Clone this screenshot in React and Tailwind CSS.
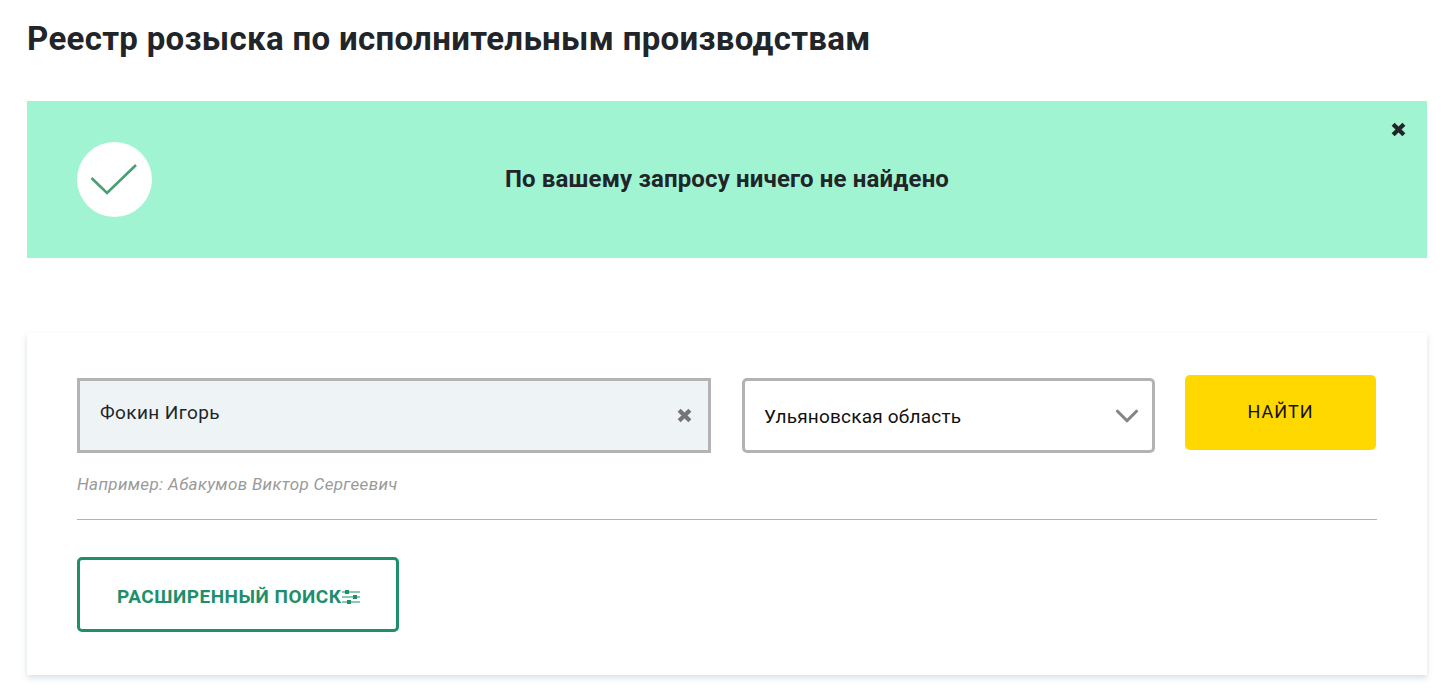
import { ChevronDown } from "lucide-react";

const CrossIcon = ({ className }) => (
  <svg viewBox="0 0 14 14" className={className} fill="none" stroke="currentColor" strokeWidth="4">
    <path d="M2 2 12 12M12 2 2 12" />
  </svg>
);

const FiltersIcon = () => (
  <svg viewBox="0 0 18 16" className="w-[18px] h-4 shrink-0 text-[#1f8f6b]" fill="currentColor">
    <rect x="0" y="2.5" width="18" height="1" />
    <rect x="0" y="7.5" width="18" height="1" />
    <rect x="0" y="12.5" width="18" height="1" />
    <rect x="3" y="1" width="4" height="4" />
    <rect x="11" y="6" width="4" height="4" />
    <rect x="5" y="11" width="4" height="4" />
  </svg>
);

const App = () => {
  return (
    <div className="w-[1444px] h-[697px] overflow-hidden bg-white pl-[27px] pr-[17px] text-[#212529] font-['Roboto',sans-serif]">
      <h1 className="h-[101px] pt-[17px] text-[33px] leading-[44px] font-bold tracking-[0.32px]">
        Реестр розыска по исполнительным производствам
      </h1>

      {/* Alert */}
      <div className="relative h-[157px] bg-[#a0f4d1] flex items-center pl-[50px] pb-[1px]">
        <div className="w-[75px] h-[75px] rounded-full bg-white flex items-center justify-center shrink-0">
          <svg viewBox="0 0 75 75" className="w-[75px] h-[75px]" fill="none" stroke="#46a072" strokeWidth="2.6">
            <path d="M14.5 36 30 51 59 23" />
          </svg>
        </div>
        <p className="flex-1 pr-[125px] text-center text-[24px] leading-[30px] font-bold tracking-[0.15px]">
          По вашему запросу ничего не найдено
        </p>
        <button className="absolute top-[21px] right-[21px] text-[#212529]">
          <CrossIcon className="w-[15px] h-[15px]" />
        </button>
      </div>

      {/* Search card */}
      <div className="mt-[75px] h-[342px] bg-white px-[50px] pt-[42px] shadow-[0_3px_6px_rgba(170,185,195,0.45)]">
        <div className="flex items-start">
          <div className="mt-[3px] w-[634px] h-[75px] border-[3px] border-[#b3b3b3] bg-[#eef3f6] flex items-center justify-between pl-[20px] pr-[16px]">
            <span className="text-[19px] leading-[24px] tracking-[0.4px] -mt-[6px]">Фокин Игорь</span>
            <CrossIcon className="w-[15px] h-[15px] text-[#757575]" />
          </div>
          <div className="mt-[3px] ml-[31px] w-[413px] h-[75px] border-[3px] border-[#b3b3b3] rounded-[5px] bg-white flex items-center justify-between pl-[19px] pr-[6px]">
            <span className="text-[19px] leading-[24px] tracking-[0.2px] text-[#111] mt-[2px]">Ульяновская область</span>
            <ChevronDown className="w-[38px] h-[38px] text-[#858585]" strokeWidth={2} />
          </div>
          <button className="ml-[30px] w-[191px] h-[75px] rounded-[5px] bg-[#ffd800] text-[18px] tracking-[1px] text-[#111] pb-[2px]">
            НАЙТИ
          </button>
        </div>

        <p className="mt-[19px] text-[17px] leading-[24px] italic text-[#9a9a9a] tracking-[0.35px]">
          Например: Абакумов Виктор Сергеевич
        </p>

        <div className="mt-[23px] border-t border-[#b3b3b3]" />

        <button className="mt-[37px] w-[322px] h-[75px] border-[3px] border-[#1f8f6b] rounded-[5px] flex items-center pl-[37px] pt-[5px] text-[19px] font-bold tracking-[0.5px] text-[#1f8f6b]">
          РАСШИРЕННЫЙ ПОИСК
          <FiltersIcon />
        </button>
      </div>
    </div>
  );
};

export default App;
